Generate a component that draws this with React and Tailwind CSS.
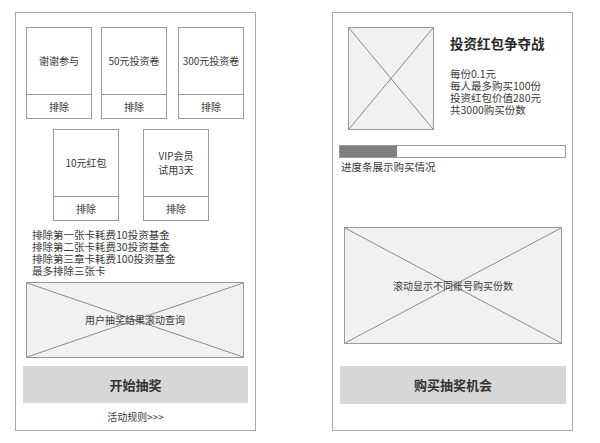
import React from "react";

const font = { fontFamily: '"Noto Sans CJK SC", "Noto Sans", sans-serif' };

// crossed-out placeholder box used for images and scrolling lists
const Placeholder = ({ className, children }) => (
  <div className={`relative border border-[#9a9a9a] bg-[#f1f1f1] flex items-center justify-center ${className}`}>
    <svg className="absolute inset-0 w-full h-full" preserveAspectRatio="none" viewBox="0 0 100 100">
      <line x1="0" y1="0" x2="100" y2="100" stroke="#8a8a8a" strokeWidth="1" vectorEffect="non-scaling-stroke" />
      <line x1="100" y1="0" x2="0" y2="100" stroke="#8a8a8a" strokeWidth="1" vectorEffect="non-scaling-stroke" />
    </svg>
    {children && <span className="relative text-[10px] leading-[12px] text-[#3a3a3a]">{children}</span>}
  </div>
);

const PrizeCard = ({ label }) => (
  <div className="w-[66px] h-[92px] border border-[#9a9a9a] flex flex-col">
    <div className="h-[67px] border-b border-[#9a9a9a] flex items-center justify-center text-center text-[10px] leading-[14px] text-[#3a3a3a]">
      {label}
    </div>
    <div className="flex-1 flex items-center justify-center text-[10px] text-[#3a3a3a]">排除</div>
  </div>
);

const App = () => {
  return (
    <div className="w-[600px] h-[443px] bg-white flex pl-[15px] pt-[12px] gap-[76px]" style={font}>
      {/* left: lottery page */}
      <div className="w-[241px] h-[419px] border border-[#a8a8a8] flex flex-col">
        <div className="flex mt-[14px] ml-[10px] gap-[9px]">
          <PrizeCard label="谢谢参与" />
          <PrizeCard label="50元投资卷" />
          <div className="ml-[2px]">
            <PrizeCard label="300元投资卷" />
          </div>
        </div>
        <div className="flex mt-[10px] ml-[37px] gap-[24px]">
          <PrizeCard label="10元红包" />
          <PrizeCard label={<>VIP会员<br />试用3天</>} />
        </div>
        <div className="mt-[8px] ml-[16px] text-[10.5px] leading-[12px] text-[#3a3a3a]">
          <div>排除第一张卡耗费10投资基金</div>
          <div>排除第二张卡耗费30投资基金</div>
          <div>排除第三章卡耗费100投资基金</div>
          <div>最多排除三张卡</div>
        </div>
        <Placeholder className="ml-[10px] mt-[5px] w-[218px] h-[76px]">用户抽奖结果滚动查询</Placeholder>
        <div className="ml-[7px] mt-[8px] w-[225px] h-[37px] bg-[#d7d7d7] flex items-center justify-center text-[13px] font-bold text-[#333]">
          开始抽奖
        </div>
        <div className="mt-[8px] text-center text-[10px] leading-[12px] text-[#3a3a3a]">活动规则&gt;&gt;&gt;</div>
      </div>

      {/* right: buy chances page */}
      <div className="w-[241px] h-[419px] border border-[#a8a8a8] flex flex-col">
        <div className="flex mt-[14px] ml-[15px]">
          <Placeholder className="w-[86px] h-[103px]" />
          <div className="ml-[16px] text-[#3a3a3a]">
            <div className="mt-[8px] text-[13.5px] leading-[16px] font-bold text-[#2a2a2a]">投资红包争夺战</div>
            <div className="mt-[17px] text-[10.5px] leading-[12px]">
              <div>每份0.1元</div>
              <div>每人最多购买100份</div>
              <div>投资红包价值280元</div>
              <div>共3000购买份数</div>
            </div>
          </div>
        </div>
        <div className="ml-[6px] mt-[15px] w-[227px] h-[13px] border border-[#9a9a9a] bg-white">
          <div className="w-[57px] h-full bg-[#7f7f7f]" />
        </div>
        <div className="ml-[8px] mt-[3px] text-[10.5px] leading-[12px] text-[#3a3a3a]">进度条展示购买情况</div>
        <Placeholder className="ml-[11px] mt-[54px] w-[218px] h-[117px]">滚动显示不同账号购买份数</Placeholder>
        <div className="ml-[7px] mt-[22px] w-[226px] h-[38px] bg-[#d7d7d7] flex items-center justify-center text-[13px] font-bold text-[#333]">
          购买抽奖机会
        </div>
      </div>
    </div>
  );
};

export default App;
